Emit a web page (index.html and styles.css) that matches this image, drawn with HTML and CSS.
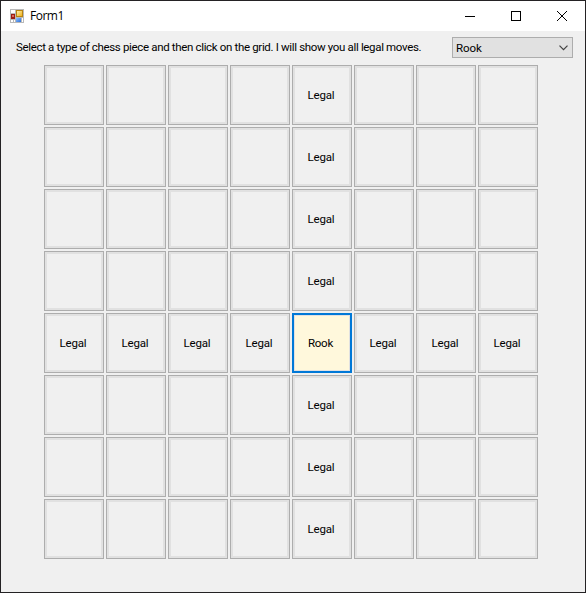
FILE: index.html
```html
<!DOCTYPE html>
<html lang="en">
<head>
<meta charset="utf-8">
<title>Form1</title>
<link rel="stylesheet" href="styles.css">
</head>
<body>
<div class="window">
  <header class="titlebar">
    <svg class="app-icon" width="14" height="14" shape-rendering="crispEdges">
      <defs>
        <linearGradient id="gold" x2="1" y2="1"><stop stop-color="#fff0a8"/><stop offset="1" stop-color="#eeb01c"/></linearGradient>
        <linearGradient id="blue" x2="1" y2="1"><stop stop-color="#8fc0ff"/><stop offset="1" stop-color="#2d6fd8"/></linearGradient>
      </defs>
      <path fill="#b9b9b9" d="M0 0h14v14H0z"/>
      <path fill="#fff" d="M1 1h4v3H1zM1 11h2v2H1zM4 11h1v2H4zM12 9h1v4h-1z"/>
      <path fill="#9c1c14" d="M1 5h4v5H1z"/><path fill="#dc6a5c" d="M2 6h2v2H2z"/>
      <path fill="#b98410" d="M6 1h7v7H6z"/><path fill="url(#gold)" d="M7 2h5v5H7z"/>
      <path fill="url(#blue)" d="M6 9h5v4H6z"/>
    </svg>
    <span class="title">Form1</span>
    <div class="controls">
      <svg width="10" height="10" shape-rendering="crispEdges"><path d="M0 5.5h10"/></svg>
      <svg width="10" height="10" shape-rendering="crispEdges"><path d="M.5.5h9v9h-9z"/></svg>
      <svg width="10" height="10"><path d="M0 0l10 10M10 0L0 10"/></svg>
    </div>
  </header>
  <div class="toolbar">
    <span class="label">Select a type of chess piece and then click on the grid. I will show you all legal moves.</span>
    <div class="combo"><span>Rook</span><svg width="9" height="6"><path d="M.5.7l4 4 4-4"/></svg></div>
  </div>
  <main class="board" id="board"></main>
</div>
<script src="board.js"></script>
</body>
</html>
```
FILE: styles.css
```css
* { box-sizing: border-box; }
body { margin: 0; }
svg { display: block; fill: none; stroke: none; }
.window {
  width: 586px;
  height: 593px;
  border: 1px solid #242224;
  background: #f0f0f0;
  color: #000;
  font: 11.5px/14px Roboto, "Liberation Sans", sans-serif;
  letter-spacing: -0.34px;
}
.titlebar {
  display: flex;
  align-items: center;
  height: 30px;
  padding: 0 18px 0 9px;
  background: #fff;
}
.title {
  margin-left: 6px;
  font: 12px/16px "Open Sans", "Noto Sans", sans-serif;
  letter-spacing: -0.5px;
}
.controls { display: flex; gap: 36px; margin-left: auto; }
.controls svg { stroke: #000; }
.toolbar {
  display: flex;
  align-items: flex-start;
  justify-content: space-between;
  height: 34px;
  padding: 6px 12px 0 15px;
}
.label { margin-top: 3px; white-space: nowrap; }
.combo {
  display: flex;
  align-items: center;
  justify-content: space-between;
  width: 121px;
  height: 21px;
  padding: 0 4px 0 3px;
  border: 1px solid #adadad;
  background: #e1e1e1;
}
.combo span { letter-spacing: -0.1px; }
.combo svg { stroke: #404040; stroke-width: 1.2; }
.board {
  display: grid;
  grid-template-columns: repeat(8, 60px);
  grid-auto-rows: 60px;
  gap: 2px;
  margin-left: 43px;
}
.square {
  padding: 0 2px 0 0;
  border: 1px solid #adadad;
  border-radius: 0;
  background: #f0f0f0;
  box-shadow: inset 0 0 0 2px #e1e1e1;
  color: #000;
  font: inherit;
  letter-spacing: -0.2px;
  text-align: center;
}
.square.selected {
  padding-right: 3px;
  border: 2px solid #0078d7;
  background: #fff8dc;
  box-shadow: inset 0 0 0 1px #e1e1e1;
}
```
FILE: board.js
```js
const board = document.getElementById('board');
const rook = { row: 4, col: 4 };
for (let row = 0; row < 8; row++) {
  for (let col = 0; col < 8; col++) {
    const square = document.createElement('button');
    square.className = 'square';
    if (row === rook.row && col === rook.col) {
      square.classList.add('selected');
      square.textContent = 'Rook';
    } else if (row === rook.row || col === rook.col) {
      square.textContent = 'Legal';
    }
    board.append(square);
  }
}
```
